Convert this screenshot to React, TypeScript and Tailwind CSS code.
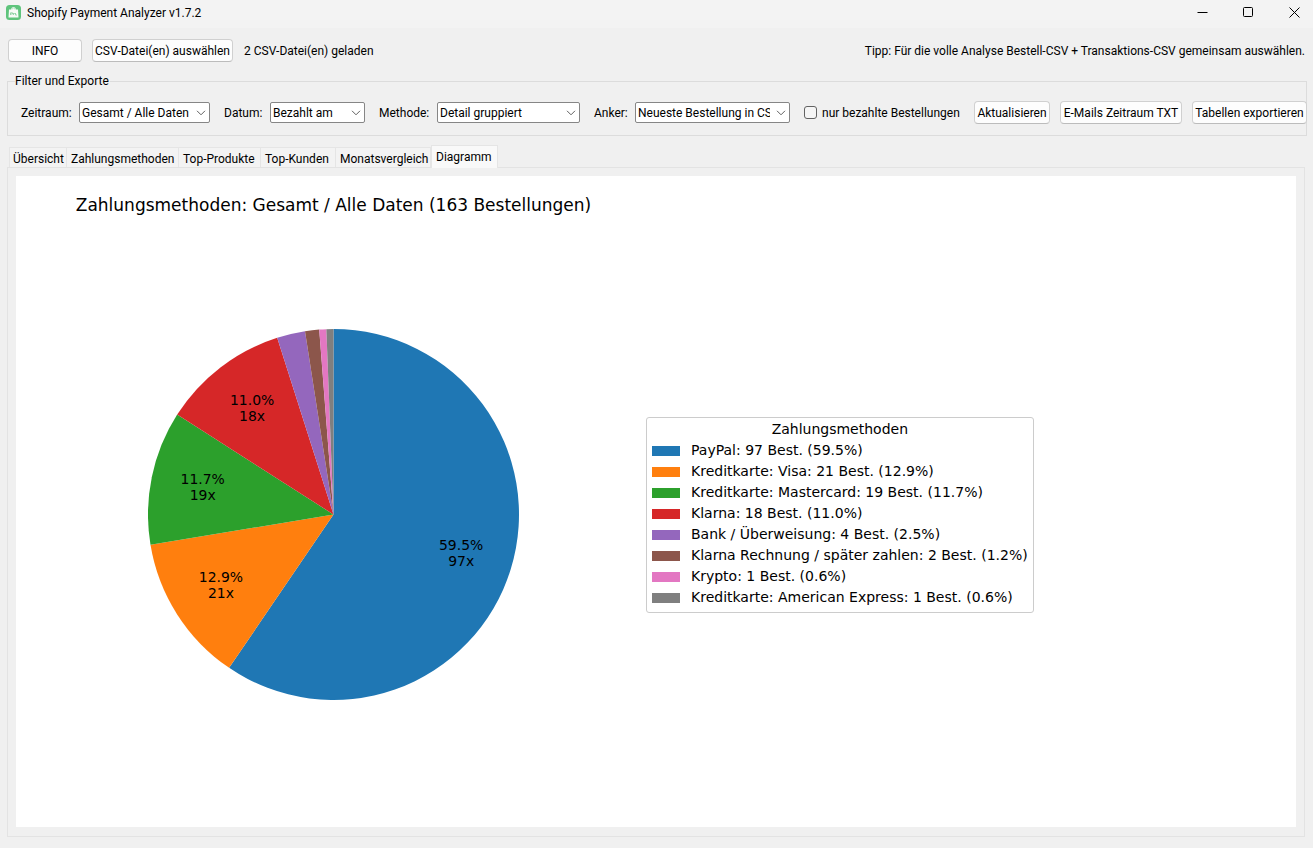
import { useState } from "react";

type Slice = {
  name: string;
  count: number;
  percent: string;
  fill: string;
  swatch: string;
};

const slices: Slice[] = [
  { name: "PayPal", count: 97, percent: "59.5%", fill: "fill-[#1f77b4]", swatch: "bg-[#1f77b4]" },
  { name: "Kreditkarte: Visa", count: 21, percent: "12.9%", fill: "fill-[#ff7f0e]", swatch: "bg-[#ff7f0e]" },
  { name: "Kreditkarte: Mastercard", count: 19, percent: "11.7%", fill: "fill-[#2ca02c]", swatch: "bg-[#2ca02c]" },
  { name: "Klarna", count: 18, percent: "11.0%", fill: "fill-[#d62728]", swatch: "bg-[#d62728]" },
  { name: "Bank / Überweisung", count: 4, percent: "2.5%", fill: "fill-[#9467bd]", swatch: "bg-[#9467bd]" },
  { name: "Klarna Rechnung / später zahlen", count: 2, percent: "1.2%", fill: "fill-[#8c564b]", swatch: "bg-[#8c564b]" },
  { name: "Krypto", count: 1, percent: "0.6%", fill: "fill-[#e377c2]", swatch: "bg-[#e377c2]" },
  { name: "Kreditkarte: American Express", count: 1, percent: "0.6%", fill: "fill-[#7f7f7f]", swatch: "bg-[#7f7f7f]" },
];

const RADIUS = 186;

function polar(fraction: number, radius: number) {
  const angle = fraction * 2 * Math.PI;
  return { x: RADIUS + radius * Math.sin(angle), y: RADIUS - radius * Math.cos(angle) };
}

function PieChart() {
  const total = slices.reduce((sum, s) => sum + s.count, 0);
  let passed = 0;
  const parts = slices.map((s) => {
    const start = passed / total;
    passed += s.count;
    const end = passed / total;
    const a = polar(start, RADIUS);
    const b = polar(end, RADIUS);
    const large = end - start > 0.5 ? 1 : 0;
    const d = `M${RADIUS} ${RADIUS}L${a.x} ${a.y}A${RADIUS} ${RADIUS} 0 ${large} 1 ${b.x} ${b.y}Z`;
    return { ...s, d, label: polar((start + end) / 2, RADIUS * 0.72) };
  });
  return (
    <svg viewBox="0 0 372 372" className="w-[371px]" role="img" aria-label="Zahlungsmethoden">
      {parts.map((p) => (
        <path key={p.name} d={p.d} className={p.fill} />
      ))}
      {parts
        .filter((p) => p.count > 10)
        .map((p) => (
          <text key={p.name} textAnchor="middle" className="fill-black text-[14px]">
            <tspan x={p.label.x} y={p.label.y - 4}>{p.percent}</tspan>
            <tspan x={p.label.x} y={p.label.y + 12}>{p.count}x</tspan>
          </text>
        ))}
    </svg>
  );
}

function Select({ id, label, labelWidth, width, options }: {
  id: string;
  label: string;
  labelWidth: string;
  width: string;
  options: string[];
}) {
  return (
    <div className="flex shrink-0 items-center">
      <label htmlFor={id} className={`${labelWidth} whitespace-nowrap`}>{label}</label>
      <div className={`${width} relative`}>
        <select
          id={id}
          className="block h-[21px] w-full appearance-none overflow-hidden rounded-[2px] border border-[#868686] bg-white pr-[19px] pl-[2px] leading-[18px]"
        >
          {options.map((o) => (
            <option key={o}>{o}</option>
          ))}
        </select>
        <svg viewBox="0 0 10 6" className="pointer-events-none absolute top-2 right-1 h-[6px] w-[10px] fill-none stroke-[#606060]">
          <path d="M1 0.8L5 4.8L9 0.8" />
        </svg>
      </div>
    </div>
  );
}

function Button({ children, width }: { children: string; width: string }) {
  return (
    <button
      type="button"
      className={`${width} h-[23px] shrink-0 rounded-[4px] border border-[#d0d0d0] border-b-[#bcbcbc] bg-[#fdfdfd] text-center leading-[18px] whitespace-nowrap`}
    >
      {children}
    </button>
  );
}

const tabs = [
  { name: "Übersicht", width: "w-[58px]" },
  { name: "Zahlungsmethoden", width: "w-[112px]" },
  { name: "Top-Produkte", width: "w-[82px]" },
  { name: "Top-Kunden", width: "w-[75px]" },
  { name: "Monatsvergleich", width: "w-[95px]" },
  { name: "Diagramm", width: "w-[67px]" },
];

export default function App() {
  const [active, setActive] = useState("Diagramm");
  return (
    <div className="flex min-h-screen flex-col bg-[#f0f0f0] font-['Roboto','Noto_Sans',sans-serif] text-[12px] leading-4 text-black">
      <header className="flex h-7 items-center bg-[#f3f3f3] pl-[6px]">
        <svg viewBox="0 0 15 15" className="-mt-1 h-[15px] w-[15px]">
          <rect width="15" height="15" rx="3.5" fill="#5fc47c" />
          <path d="M3 4.500H5Q5.200 2 7.500 2Q9.800 2 10 4.500H12L12.500 12.500H2.500Z" fill="#f6fbf7" />
          <path d="M6 4.500Q6.200 3 7.500 3Q8.800 3 9 4.500" fill="none" stroke="#a8dcb7" strokeWidth="0.800" />
          <path d="M4.500 10V7.800H6.500V9H4.500M7.500 10V8L8.500 9L9.500 8V10H11" fill="none" stroke="#8fd3a4" strokeWidth="0.900" />
        </svg>
        <h1 className="ml-[6px] pb-[2px] whitespace-nowrap">Shopify Payment Analyzer v1.7.2</h1>
        <div className="ml-auto flex items-center gap-[9px] pb-1">
          <button type="button" aria-label="Minimieren" className="flex w-[37px] justify-center">
            <svg viewBox="0 0 11 11" className="h-[11px] w-[11px] fill-none stroke-black"><path d="M0.500 5.500H10.500" /></svg>
          </button>
          <button type="button" aria-label="Maximieren" className="flex w-[37px] justify-center">
            <svg viewBox="0 0 11 11" className="h-[11px] w-[11px] fill-none stroke-black"><rect x="0.500" y="0.500" width="9" height="9" rx="1" /></svg>
          </button>
          <button type="button" aria-label="Schließen" className="flex w-[37px] justify-center">
            <svg viewBox="0 0 11 11" className="h-[11px] w-[11px] fill-none stroke-black"><path d="M0.500 0.500L10.500 10.500M10.500 0.500L0.500 10.500" /></svg>
          </button>
        </div>
      </header>

      <main className="flex flex-1 flex-col px-2 pt-[11px] pb-[11px]">
        <div className="flex items-center">
          <Button width="w-[74px]">INFO</Button>
          <div className="ml-[10px] flex">
            <Button width="w-[141px]">CSV-Datei(en) auswählen</Button>
          </div>
          <p className="ml-[11px] whitespace-nowrap">2 CSV-Datei(en) geladen</p>
          <p className="ml-auto whitespace-nowrap">Tipp: Für die volle Analyse Bestell-CSV + Transaktions-CSV gemeinsam auswählen.</p>
        </div>

        <fieldset className="mt-[11px] -mr-[2px] -ml-px border border-[#dcdcdc] pr-0 pb-[11px] pl-[13px]">
          <legend className="-ml-[6px] pr-px">Filter und Exporte</legend>
          <div className="mt-3 -mr-px flex items-center gap-[14px]">
            <Select id="zeitraum" label="Zeitraum:" labelWidth="w-[58px]" width="w-[131px]" options={["Gesamt / Alle Daten"]} />
            <Select id="datum" label="Datum:" labelWidth="w-[46px]" width="w-[95px]" options={["Bezahlt am"]} />
            <Select id="methode" label="Methode:" labelWidth="w-[58px]" width="w-[143px]" options={["Detail gruppiert"]} />
            <Select id="anker" label="Anker:" labelWidth="w-[41px]" width="w-[155px]" options={["Neueste Bestellung in CSV"]} />
            <label className="flex shrink-0 items-center gap-[5px] whitespace-nowrap">
              <input type="checkbox" className="h-[13px] w-[13px] appearance-none rounded-[3px] border border-[#626262] bg-[#f5f5f5] checked:bg-[#005fb8]" />
              nur bezahlte Bestellungen
            </label>
            <div className="ml-auto flex gap-[10px]">
              <Button width="w-[76px]">Aktualisieren</Button>
              <Button width="w-[122px]">E-Mails Zeitraum TXT</Button>
              <Button width="w-[115px]">Tabellen exportieren</Button>
            </div>
          </div>
        </fieldset>

        <div role="tablist" className="mt-[9px] flex items-end pl-px">
          {tabs.map((t) => (
            <button
              key={t.name}
              type="button"
              role="tab"
              aria-selected={t.name === active}
              onClick={() => setActive(t.name)}
              className={`${t.width} flex shrink-0 pl-1 whitespace-nowrap ${
                t.name === active
                  ? "z-10 -mb-px h-[23px] border border-b-0 border-[#e5e5e5] bg-[#f9f9f9] pt-[3px]"
                  : "h-5 border-t border-r border-[#e5e5e5] bg-[#f3f3f3] pt-[3px] first:border-l first:pl-[3px]"
              }`}
            >
              {t.name}
            </button>
          ))}
        </div>

        <section role="tabpanel" className="-ml-px flex flex-1 flex-col border border-[#e3e3e3] pt-2 pr-2 pb-[9px] pl-2">
          <figure className="flex flex-1 items-start bg-white pl-[66px] font-['DejaVu_Sans',sans-serif]">
            <div className="flex w-[503px] shrink-0 flex-col items-center pt-[18px]">
              <h2 className="text-[17px] leading-[22px] whitespace-nowrap">Zahlungsmethoden: Gesamt / Alle Daten (163 Bestellungen)</h2>
              <div className="mt-[113px]">
                <PieChart />
              </div>
            </div>
            <figcaption className="mt-[241px] ml-[61px] shrink-0 rounded-[3px] border border-[#cccccc] px-[5px] pt-[1px] pb-1 text-[14px] leading-[21px]">
              <p className="text-center">Zahlungsmethoden</p>
              <ul>
                {slices.map((s) => (
                  <li key={s.name} className="flex items-center gap-[11px] whitespace-nowrap">
                    <span className={`${s.swatch} h-[10px] w-7`} />
                    {s.name}: {s.count} Best. ({s.percent})
                  </li>
                ))}
              </ul>
            </figcaption>
          </figure>
        </section>
      </main>
    </div>
  );
}
